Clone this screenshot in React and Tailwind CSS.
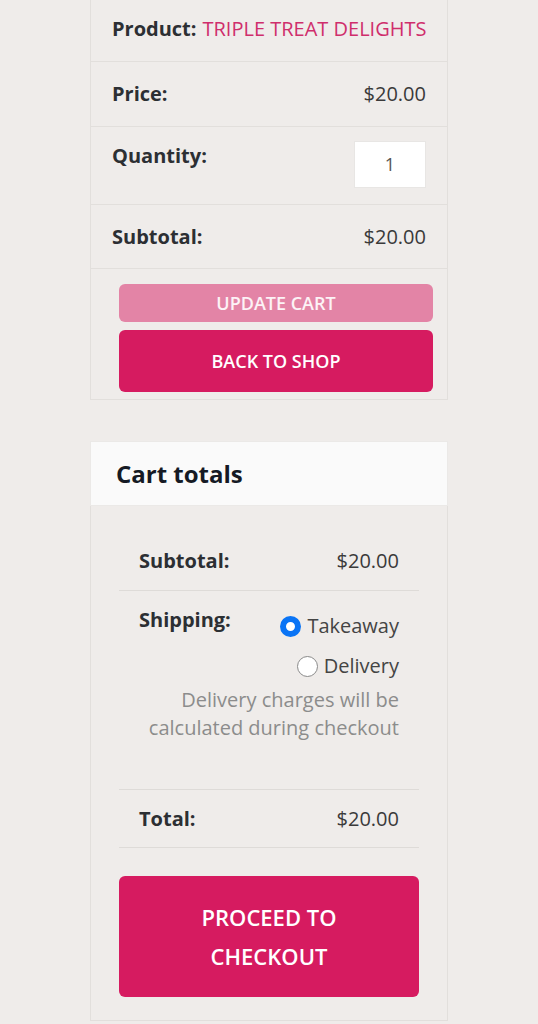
import { useState } from 'react';

const font = { fontFamily: '"Open Sans", "Noto Sans", sans-serif' };

function Row({ label, children, className = '' }) {
  return (
    <div className={`flex justify-between border-b border-[#e2dfdc] px-[21px] ${className}`}>
      <span className="font-bold text-[#2c2f33]">{label}</span>
      {children}
    </div>
  );
}

function Radio({ checked, label, onClick }) {
  return (
    <label className="flex items-center gap-[6px] cursor-pointer" onClick={onClick}>
      {checked ? (
        <span className="w-[21px] h-[21px] rounded-full border-[6px] border-[#0a74f5] bg-white" />
      ) : (
        <span className="w-[21px] h-[21px] rounded-full border border-[#8a8a8a] bg-white" />
      )}
      <span className="text-[#444]">{label}</span>
    </label>
  );
}

export default function App() {
  const [ship, setShip] = useState('takeaway');

  return (
    <div className="min-h-[1024px] bg-[#efecea] text-[20px] pb-[4px]" style={font}>
      {/* Cart item */}
      <div className="mx-[90px] border-x border-b border-[#e2dfdc]">
        <div className="flex items-center gap-[6px] h-[62px] px-[21px] pb-[4px] border-b border-[#e2dfdc] whitespace-nowrap">
          <span className="font-bold text-[#2c2f33]">Product:</span>
          <span className="text-[#cf2e6c]">TRIPLE TREAT DELIGHTS</span>
        </div>
        <Row label="Price:" className="items-center h-[65px]">
          <span className="text-[#3a3a3a]">$20.00</span>
        </Row>
        <Row label="Quantity:" className="h-[78px] pt-[14px]">
          <div className="w-[72px] h-[47px] bg-white border border-[#e8e6e4] flex items-center justify-center text-[#555] text-[18px]">
            1
          </div>
        </Row>
        <Row label="Subtotal:" className="items-center h-[64px]">
          <span className="text-[#3a3a3a]">$20.00</span>
        </Row>
        <div className="px-[28px] pt-[15px] pb-[7px] flex flex-col gap-[8px] -mr-[14px]">
          <button className="h-[38px] rounded-[6px] bg-[#e384a6] text-white/90 text-[18px] font-semibold">UPDATE CART</button>
          <button className="h-[62px] rounded-[6px] bg-[#d61b60] text-white text-[18px] font-semibold">BACK TO SHOP</button>
        </div>
      </div>

      {/* Cart totals */}
      <div className="mx-[90px] mt-[41px] border-x border-b border-[#e2dfdc]">
        <div className="h-[65px] bg-[#fafafa] border border-[#ebe9e7] -mx-px flex items-center px-[25px]">
          <h2 className="text-[24px] font-bold text-[#151a24]">Cart totals</h2>
        </div>
        <div className="px-[28px] pt-[27px] pb-[23px]">
          <div className="flex justify-between items-center h-[58px] px-[20px] pb-[2px] border-b border-[#dedbd8]">
            <span className="font-bold text-[#2c2f33]">Subtotal:</span>
            <span className="text-[#3a3a3a]">$20.00</span>
          </div>
          <div className="px-[20px] pt-[14px] h-[199px] border-b border-[#dedbd8]">
            <div className="flex justify-between">
              <span className="font-bold text-[#2c2f33]">Shipping:</span>
              <div className="flex flex-col items-end whitespace-nowrap">
                <div className="mt-[6px]">
                  <Radio checked={ship === 'takeaway'} label="Takeaway" onClick={() => setShip('takeaway')} />
                </div>
                <div className="mt-[10px]">
                  <Radio checked={ship === 'delivery'} label="Delivery" onClick={() => setShip('delivery')} />
                </div>
              </div>
            </div>
            <p className="text-right text-[#8c8c8c] leading-[28px] mt-[5px] whitespace-nowrap">
              Delivery charges will be
              <br />
              calculated during checkout
            </p>
          </div>
          <div className="flex justify-between items-center h-[58px] px-[20px] border-b border-[#dedbd8]">
            <span className="font-bold text-[#2c2f33]">Total:</span>
            <span className="text-[#3a3a3a]">$20.00</span>
          </div>
          <button className="mt-[28px] w-full h-[121px] rounded-[6px] bg-[#d61b60] text-white text-[22px] font-semibold leading-[39px] px-4">
            PROCEED TO
            <br />
            CHECKOUT
          </button>
        </div>
      </div>
    </div>
  );
}
